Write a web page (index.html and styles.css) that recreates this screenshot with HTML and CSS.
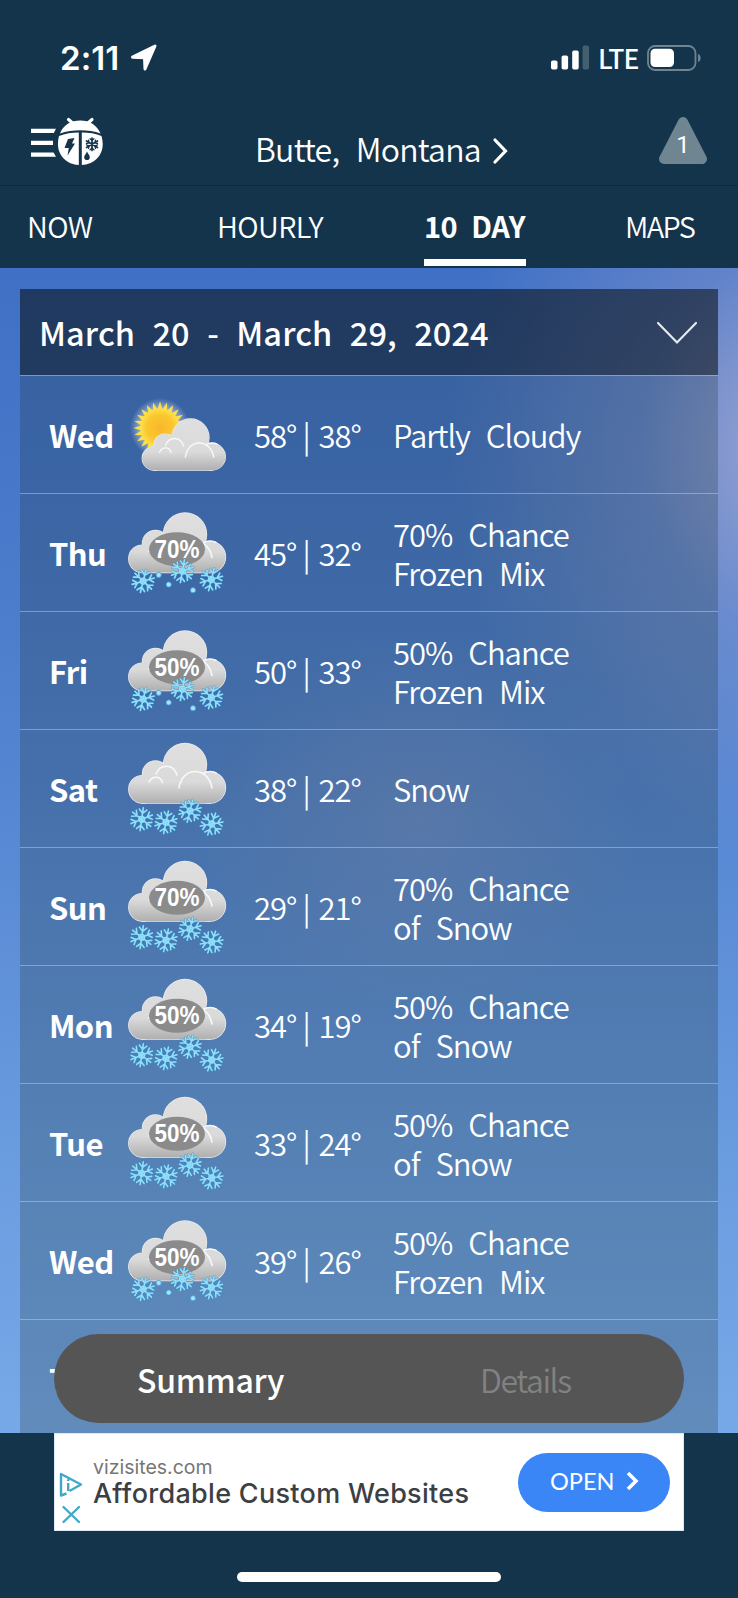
FILE: index.html
```html
<!DOCTYPE html>
<html lang="en">
  <head>
    <meta charset="UTF-8" />
    <meta name="viewport" content="width=device-width, initial-scale=1.0" />
    <title>10 Day Forecast</title>
    <link rel="stylesheet" href="styles.css">
  </head>
  <body>
    <!-- Shared shapes for the weather icons -->
    <svg class="defs" aria-hidden="true">
      <defs>
        <linearGradient id="cloud-fill" gradientUnits="userSpaceOnUse" x1="0" y1="0" x2="0" y2="60">
          <stop offset="0" stop-color="#dfdfdf" />
          <stop offset="0.65" stop-color="#dadada" />
          <stop offset="1" stop-color="#b0b0b0" />
        </linearGradient>
        <radialGradient id="sun-fill">
          <stop offset="0" stop-color="#f9b52a" />
          <stop offset="0.7" stop-color="#fbc830" />
          <stop offset="1" stop-color="#fde04a" />
        </radialGradient>
        <radialGradient id="sun-glow">
          <stop offset="0.7" stop-color="#ffffff" stop-opacity="0.4" />
          <stop offset="1" stop-color="#ffffff" stop-opacity="0" />
        </radialGradient>
        <g id="puffs">
          <circle cx="57" cy="22" r="21.5" />
          <circle cx="27.500" cy="31" r="13" />
          <circle cx="82" cy="44.500" r="15.500" />
          <circle cx="14.500" cy="46.300" r="13.700" />
          <path d="M14 40 30 26 60 20 82 40V60H14Z" />
        </g>
        <g id="cloud">
          <use href="#puffs" fill="none" stroke="#ececec" stroke-width="1.400" />
          <use href="#puffs" fill="url(#cloud-fill)" />
          <path d="M51 45C54 23 80 23 84 45M28 31C32 21 45 20 49 32M21 39C24 33 32 32 34.500 39.500M76 30C79 28 85 28 88 30" fill="none" stroke="#f8f8f8" stroke-width="1.600" stroke-linecap="round" />
        </g>
        <g id="arm">
          <path d="M0 0V-11.500M0 -6-3.800-9.800M0 -6 3.800-9.800" />
        </g>
        <g id="arms">
          <use href="#arm" />
          <use href="#arm" transform="rotate(60)" />
          <use href="#arm" transform="rotate(120)" />
          <use href="#arm" transform="rotate(180)" />
          <use href="#arm" transform="rotate(240)" />
          <use href="#arm" transform="rotate(300)" />
          <circle r="2.800" />
        </g>
        <g id="flake" fill="none" stroke-linecap="round">
          <use href="#arms" stroke="#2f86c8" stroke-opacity="0.6" stroke-width="2.600" />
          <use href="#arms" stroke="#8fe0fa" stroke-width="1.600" />
        </g>
        <g id="snow">
          <use href="#flake" transform="translate(13.7 76.3) rotate(8)" />
          <use href="#flake" transform="translate(38 79.3) rotate(12)" />
          <use href="#flake" transform="translate(62 68) rotate(14)" />
          <use href="#flake" transform="translate(83.7 81) rotate(20)" />
        </g>
        <g id="mix">
          <use href="#flake" transform="translate(15.2 68.7) rotate(14)" />
          <use href="#flake" transform="translate(54.4 58.7) rotate(10)" />
          <use href="#flake" transform="translate(83.4 67) rotate(14)" />
          <g fill="#a5e4fb" stroke="#3d98d8" stroke-width="0.800">
            <circle cx="30.700" cy="62.400" r="2.600" />
            <circle cx="40.700" cy="72" r="2.600" />
            <circle cx="65" cy="77.700" r="2.600" />
          </g>
        </g>
        <ellipse id="oval" cx="49" cy="36.700" rx="28" ry="17" fill="#8b8b8b" />
      </defs>
    </svg>

    <div class="phone">
      <div class="status-bar">
        <span class="time">2:11</span>
        <svg class="location" width="28" height="28" viewBox="0 0 28 28">
          <path d="M25 2 15 25 14.500 13.800 2.500 13.200Z" fill="#fff" stroke="#fff" stroke-width="3" stroke-linejoin="round" />
        </svg>
        <svg class="signal" width="38" height="25" viewBox="0 0 38 25">
          <rect x="0" y="15.500" width="6.500" height="9" rx="1.800" fill="#fff" />
          <rect x="10.600" y="10.500" width="6.500" height="14" rx="1.800" fill="#fff" />
          <rect x="21.200" y="5.500" width="6.500" height="19" rx="1.800" fill="#fff" />
          <rect x="31.600" y="0.500" width="6.400" height="24" rx="1.800" fill="#436071" />
        </svg>
        <span class="network">LTE</span>
        <svg class="battery" width="55" height="26" viewBox="0 0 55 26">
          <rect x="1" y="1" width="47.500" height="24" rx="7" fill="none" stroke="#70838f" stroke-width="1.800" />
          <rect x="3.500" y="3.800" width="23.500" height="18.200" rx="4.500" fill="#fff" />
          <path d="M51 9C54.500 10 54.500 16 51 17Z" fill="#70838f" />
        </svg>
      </div>

      <div class="top-bar">
        <svg class="menu" width="74" height="50" viewBox="0 0 74 50">
          <path d="M0 11.800H25L22.800 16H0ZM0 23.800H22V28H0ZM0 35.600H22.500L25 39.800H0Z" fill="#fff" />
          <path d="M37.500 2.500 41.500 6M61 2.500 57 6" stroke="#fff" stroke-width="3.200" stroke-linecap="round" />
          <path d="M29 16.500C32 8 40 3.500 49.300 3.500S66 8 69.500 16.500C58 12.200 41 12.200 29 16.500Z" fill="#fff" />
          <path d="M28 19C34 16.500 41 15.500 47.800 15.500V48C36 47.500 27 38.500 27 27.500 27 24 27.300 21.500 28 19ZM50.800 15.500C58 15.500 65 16.500 70.500 19 71.200 21.500 71.700 24 71.700 27.500 71.700 38.500 63 47.500 50.800 48Z" fill="#fff" />
          <path d="M37 22 43.500 21 41 26.500H44L36.500 38.500 37.800 31H33.500Z" fill="#14344b" />
          <g stroke="#14344b" stroke-width="1.700" fill="none" stroke-linecap="round">
            <path d="M61 21V33.500M55.500 24 66.500 30.500M66.500 24 55.500 30.500" />
            <path d="M59 21.800 61 23.500 63 21.800M59 32.800 61 31 63 32.800M55.500 26.500 58 25.800 57.500 23.200M66.500 26.500 64 25.800 64.500 23.200M55.500 28 58 28.800 57.500 31.300M66.500 28 64 28.800 64.500 31.300" stroke-width="1.300" />
          </g>
          <path d="M56 34.500C57.500 37.500 58.800 38.500 58.800 40.200A2.800 2.800 0 0 1 53.200 40.200C53.200 38.500 54.800 37.500 56 34.500Z" fill="#14344b" />
        </svg>
        <div class="place">
          <span class="place-name">Butte, Montana</span>
          <svg width="17" height="28" viewBox="0 0 17 28">
            <path d="M3 3 13.500 14 3 25" fill="none" stroke="#fff" stroke-width="3.200" stroke-linecap="round" />
          </svg>
        </div>
        <div class="alert">
          <svg width="48" height="48" viewBox="0 0 48 48">
            <path d="M24 5 43 42H5Z" fill="#6f8592" stroke="#6f8592" stroke-width="10" stroke-linejoin="round" />
          </svg>
          <span class="alert-count">1</span>
        </div>
      </div>

      <div class="tabs">
        <span class="tab tab-now">NOW</span>
        <span class="tab tab-hourly">HOURLY</span>
        <span class="tab tab-days active">10 DAY</span>
        <span class="tab tab-maps">MAPS</span>
      </div>

      <div class="forecast">
        <div class="panel">
          <div class="panel-header">
            <span class="range">March 20 - March 29, 2024</span>
            <svg width="42" height="24" viewBox="0 0 42 24">
              <path d="M2 2 21 21.500 40 2" fill="none" stroke="#e6e9ef" stroke-width="2.200" stroke-linecap="round" />
            </svg>
          </div>

          <div class="day-row">
            <span class="day">Wed</span>
            <svg class="icon" viewBox="0 0 100 118">
              <circle cx="33" cy="52" r="30" fill="url(#sun-glow)" />
              <path id="rays" d="" fill="#fde047" />
              <circle cx="33" cy="52" r="19.500" fill="url(#sun-fill)" />
              <use href="#cloud" transform="translate(14.5 42.5) scale(.86)" />
            </svg>
            <div class="temps"><span class="temp">58°</span><span class="bar">|</span><span class="temp">38°</span></div>
            <p class="conditions">Partly Cloudy</p>
          </div>

          <div class="day-row">
            <span class="day">Thu</span>
            <svg class="icon" viewBox="0 0 100 118">
              <g transform="translate(1 18.5)">
                <use href="#cloud" /><use href="#oval" /><use href="#mix" />
                <text class="chance" x="49" y="45" textLength="45" lengthAdjust="spacingAndGlyphs">70%</text>
              </g>
            </svg>
            <div class="temps"><span class="temp">45°</span><span class="bar">|</span><span class="temp">32°</span></div>
            <p class="conditions">70% Chance<br>Frozen Mix</p>
          </div>

          <div class="day-row">
            <span class="day">Fri</span>
            <svg class="icon" viewBox="0 0 100 118">
              <g transform="translate(1 18.5)">
                <use href="#cloud" /><use href="#oval" /><use href="#mix" />
                <text class="chance" x="49" y="45" textLength="45" lengthAdjust="spacingAndGlyphs">50%</text>
              </g>
            </svg>
            <div class="temps"><span class="temp">50°</span><span class="bar">|</span><span class="temp">33°</span></div>
            <p class="conditions">50% Chance<br>Frozen Mix</p>
          </div>

          <div class="day-row">
            <span class="day">Sat</span>
            <svg class="icon" viewBox="0 0 100 118">
              <g transform="translate(1 13)">
                <use href="#cloud" /><use href="#snow" />
              </g>
            </svg>
            <div class="temps"><span class="temp">38°</span><span class="bar">|</span><span class="temp">22°</span></div>
            <p class="conditions">Snow</p>
          </div>

          <div class="day-row">
            <span class="day">Sun</span>
            <svg class="icon" viewBox="0 0 100 118">
              <g transform="translate(1 13)">
                <use href="#cloud" /><use href="#oval" /><use href="#snow" />
                <text class="chance" x="49" y="45" textLength="45" lengthAdjust="spacingAndGlyphs">70%</text>
              </g>
            </svg>
            <div class="temps"><span class="temp">29°</span><span class="bar">|</span><span class="temp">21°</span></div>
            <p class="conditions">70% Chance<br>of Snow</p>
          </div>

          <div class="day-row">
            <span class="day">Mon</span>
            <svg class="icon" viewBox="0 0 100 118">
              <g transform="translate(1 13)">
                <use href="#cloud" /><use href="#oval" /><use href="#snow" />
                <text class="chance" x="49" y="45" textLength="45" lengthAdjust="spacingAndGlyphs">50%</text>
              </g>
            </svg>
            <div class="temps"><span class="temp">34°</span><span class="bar">|</span><span class="temp">19°</span></div>
            <p class="conditions">50% Chance<br>of Snow</p>
          </div>

          <div class="day-row">
            <span class="day">Tue</span>
            <svg class="icon" viewBox="0 0 100 118">
              <g transform="translate(1 13)">
                <use href="#cloud" /><use href="#oval" /><use href="#snow" />
                <text class="chance" x="49" y="45" textLength="45" lengthAdjust="spacingAndGlyphs">50%</text>
              </g>
            </svg>
            <div class="temps"><span class="temp">33°</span><span class="bar">|</span><span class="temp">24°</span></div>
            <p class="conditions">50% Chance<br>of Snow</p>
          </div>

          <div class="day-row">
            <span class="day">Wed</span>
            <svg class="icon" viewBox="0 0 100 118">
              <g transform="translate(1 18.5)">
                <use href="#cloud" /><use href="#oval" /><use href="#mix" />
                <text class="chance" x="49" y="45" textLength="45" lengthAdjust="spacingAndGlyphs">50%</text>
              </g>
            </svg>
            <div class="temps"><span class="temp">39°</span><span class="bar">|</span><span class="temp">26°</span></div>
            <p class="conditions">50% Chance<br>Frozen Mix</p>
          </div>

          <div class="day-row">
            <span class="day">Thu</span>
          </div>
        </div>

        <div class="switcher">
          <span class="summary">Summary</span>
          <span class="details">Details</span>
        </div>
      </div>

      <div class="ad">
        <div class="ad-marks">
          <svg width="24" height="54" viewBox="0 0 24 54">
            <path d="M7.500 22.500 2 24.500V3L22 13.500 10.500 20" fill="none" stroke="#3fa9c9" stroke-width="2.400" stroke-linejoin="round" />
            <path d="M9.200 12V20M9.200 8.300V10" stroke="#3fa9c9" stroke-width="2.400" />
            <path d="M4.500 36 20 51M20 36 4.500 51" stroke="#3fa9c9" stroke-width="2.400" stroke-linecap="round" />
          </svg>
        </div>
        <div class="ad-copy">
          <span class="ad-site">vizisites.com</span>
          <span class="ad-title">Affordable Custom Websites</span>
        </div>
        <div class="ad-button">
          <span>OPEN</span>
          <svg width="14" height="20" viewBox="0 0 14 20">
            <path d="M2 2 10 10 2 18" fill="none" stroke="#fff" stroke-width="3.600" />
          </svg>
        </div>
      </div>

      <div class="home-indicator"></div>
    </div>

    <script>
      // Build the sun's ring of triangular rays
      const points = [];
      const count = 24;
      for (let i = 0; i < count * 2; i++) {
        const radius = i % 2 === 0 ? 26.5 : 19;
        const angle = (Math.PI * i) / count;
        const x = 33 + radius * Math.sin(angle);
        const y = 52 - radius * Math.cos(angle);
        points.push(x.toFixed(1) + " " + y.toFixed(1));
      }
      document.getElementById("rays").setAttribute("d", "M" + points.join("L") + "Z");
    </script>
  </body>
</html>
```
FILE: styles.css
```css
* {
  box-sizing: border-box;
}

body {
  margin: 0;
  background-color: #14344b;
  color: #fff;
  font-family: "Noto Sans CJK SC", "Noto Sans", sans-serif;
}

svg {
  display: block;
  flex: none;
}

.defs {
  position: absolute;
  width: 0;
  height: 0;
}

.phone {
  width: 738px;
  height: 1598px;
  overflow: hidden;
  display: flex;
  flex-direction: column;
}

/* Status bar */
.status-bar {
  display: flex;
  align-items: center;
  height: 117px;
  padding: 0 0 2px 60px;
}

.time {
  width: 70px;
  font-family: Inter, sans-serif;
  font-weight: 600;
  font-size: 33px;
  letter-spacing: 0.1px;
}

.signal {
  margin-left: 393px;
}

.network {
  width: 48px;
  margin-left: 9px;
  margin-right: 1px;
  font-size: 26.5px;
  font-weight: 500;
  letter-spacing: -1px;
}

/* Location and menu */
.top-bar {
  display: flex;
  height: 69px;
  padding-left: 31px;
  border-bottom: 1px solid #0d2a3e;
}

.place {
  display: flex;
  align-items: center;
  width: 554px;
  height: 68px;
  padding-left: 150px;
}

.place-name {
  width: 237px;
  margin-top: -6px;
  font-size: 32px;
  font-weight: 350;
  letter-spacing: -0.75px;
  word-spacing: 10px;
  white-space: nowrap;
}

.alert {
  display: grid;
  width: 48px;
  height: 48px;
}

.alert svg,
.alert-count {
  grid-area: 1 / 1;
}

.alert-count {
  padding-top: 8px;
  text-align: center;
  font-family: Roboto, sans-serif;
  font-size: 24px;
  line-height: 40px;
}

/* Tabs */
.tabs {
  display: flex;
  height: 82px;
  padding: 0 0 2px 27px;
}

.tab {
  display: flex;
  align-items: center;
  padding-bottom: 2px;
  font-size: 29px;
  font-weight: 350;
  letter-spacing: -0.6px;
  white-space: nowrap;
}

.tab-now {
  width: 190px;
}

.tab-hourly {
  width: 207px;
}

.tab-days {
  width: 102px;
  margin-right: 99px;
}

.tab-maps {
  letter-spacing: -1.6px;
}

.tab.active {
  padding-top: 6px;
  border-bottom: 7px solid #fff;
  font-weight: 600;
  letter-spacing: -0.5px;
  word-spacing: 8px;
}

/* Forecast */
.forecast {
  position: relative;
  height: 1165px;
  padding: 21px 20px 0;
  overflow: hidden;
  background:
    radial-gradient(ellipse 350px 420px at 108% 15%, rgba(180, 178, 212, 0.8), rgba(160, 165, 210, 0.35) 45%, rgba(160, 165, 210, 0) 100%),
    radial-gradient(ellipse 220px 190px at 57% 47%, rgba(150, 160, 200, 0.32), rgba(150, 160, 200, 0)),
    linear-gradient(#3f70c5, #4778c9 20%, #5586d2 45%, #699bdf 75%, #77a9e8);
}

.panel {
  height: 1144px;
  overflow: hidden;
  background-color: rgba(20, 35, 30, 0.22);
}

.panel-header {
  display: flex;
  align-items: center;
  justify-content: space-between;
  height: 86px;
  padding: 0 20px 0 19px;
  background-color: rgba(0, 0, 0, 0.4);
}

.panel-header svg {
  margin-top: 2px;
}

.range {
  margin-top: -2px;
  font-size: 32.5px;
  font-weight: 500;
  letter-spacing: 0.1px;
  word-spacing: 10px;
  white-space: nowrap;
}

.day-row {
  display: flex;
  align-items: center;
  height: 118px;
  padding-left: 29px;
  border-top: 1px solid rgba(210, 215, 225, 0.45);
}

.day {
  width: 78px;
  font-size: 31px;
  font-weight: 600;
  letter-spacing: -0.6px;
}

.icon {
  width: 100px;
  height: 118px;
}

.chance {
  font-family: "Liberation Sans", Arial, sans-serif;
  font-size: 26px;
  font-weight: bold;
  fill: #fff;
  text-anchor: middle;
}

.temps {
  display: flex;
  width: 140px;
  padding-left: 27px;
  font-size: 31px;
  font-weight: 350;
  letter-spacing: -1px;
}

.temp {
  width: 52px;
}

.bar {
  width: 17px;
}

.conditions {
  margin: 0;
  padding-left: 26px;
  font-size: 31px;
  line-height: 39px;
  font-weight: 350;
  letter-spacing: -1px;
  word-spacing: 10px;
}

/* Summary / Details switch, floating over the list */
.switcher {
  position: absolute;
  left: 54px;
  bottom: 10px;
  display: flex;
  align-items: center;
  width: 630px;
  height: 89px;
  padding-left: 83px;
  border-radius: 45px;
  background-color: #555;
  font-size: 32px;
}

.summary {
  width: 343px;
  font-weight: 500;
  letter-spacing: -0.3px;
}

.details {
  color: #828282;
  font-weight: 350;
  letter-spacing: -1.4px;
}

/* Banner ad */
.ad {
  display: flex;
  align-items: center;
  width: 630px;
  height: 98px;
  margin-left: 54px;
  border: 1px solid #dce8f5;
  background-color: #fff;
  font-family: Inter, sans-serif;
}

.ad-marks {
  padding: 32px 0 0 4px;
}

.ad-copy {
  display: flex;
  flex-direction: column;
  width: 435px;
  padding-left: 10px;
  white-space: nowrap;
}

.ad-site {
  color: #757575;
  font-size: 19.5px;
  line-height: 24px;
}

.ad-title {
  color: #3c4043;
  font-size: 27px;
  font-weight: 500;
  letter-spacing: 0.3px;
  line-height: 30px;
}

.ad-button {
  display: flex;
  align-items: center;
  gap: 12px;
  width: 152px;
  height: 59px;
  padding: 0 0 2px 32px;
  border-radius: 30px;
  background-color: #3a86f7;
  font-family: Lato, sans-serif;
  font-size: 23.5px;
}

.home-indicator {
  width: 264px;
  height: 10px;
  margin: 41px 0 0 237px;
  border-radius: 5px;
  background-color: #fff;
}
```
